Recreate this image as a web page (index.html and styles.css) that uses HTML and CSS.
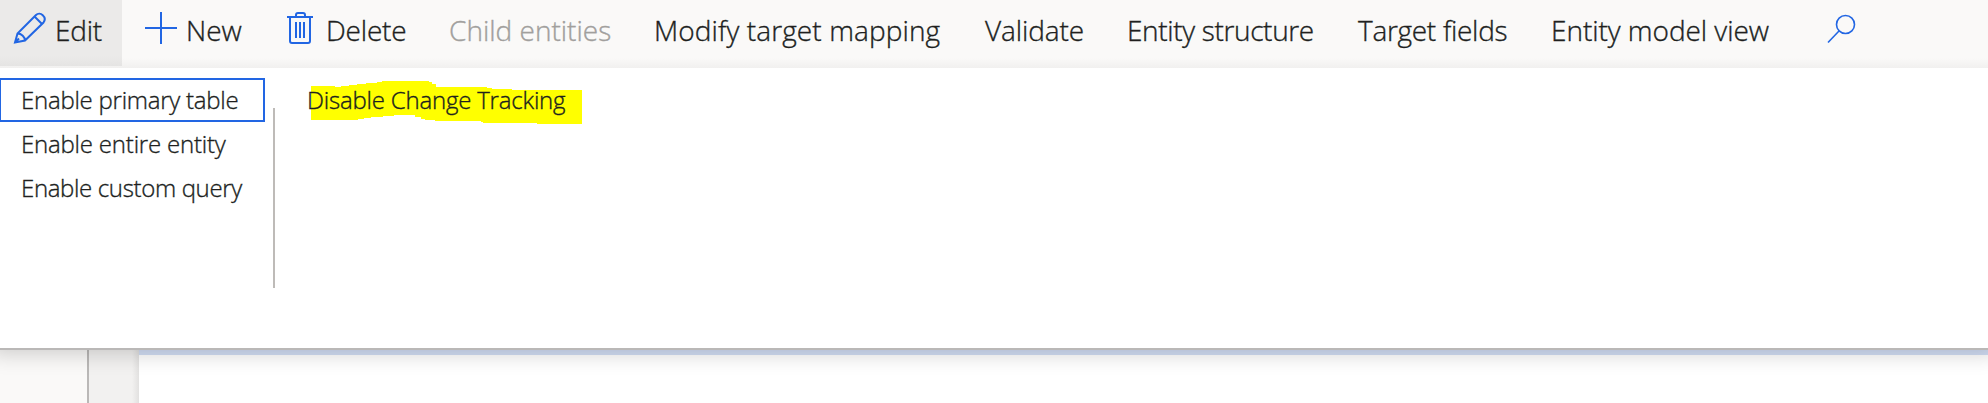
FILE: index.html
```
<!DOCTYPE html>
<html lang="en">
<head>
<meta charset="utf-8">
<title>Target entities</title>
<link rel="stylesheet" href="styles.css">
</head>
<body>
<div class="page">
  <nav class="toolbar">
    <a class="tool tool-edit active">
      <svg class="icon" width="34" height="34" viewBox="0 0 34 34"><path d="M2 30.500 4.500 21.500 23 3C27-1 34.500 5 30.500 10.500L12 28.500ZM21.500 4.500 29 12M4.500 21.500C8.500 21.500 12 25 12 28.500M2 30.500 6 26.500"/></svg>
      <span>Edit</span></a>
    <a class="tool tool-new">
      <svg class="icon" width="32" height="32" viewBox="0 0 32 32"><path d="M16 0V32M0 16H32"/></svg>
      <span>New</span></a>
    <a class="tool tool-delete">
      <svg class="icon" width="26" height="32" viewBox="0 0 26 32"><path d="M0 5H26M9 5V3Q9 1 11 1H16Q18 1 18 3V5M3 5V29Q3 31 5 31H21Q23 31 23 29V5M9 10V26M13 10V26M17 10V26"/></svg>
      <span>Delete</span></a>
    <a class="tool tool-child disabled"><span>Child entities</span></a>
    <a class="tool tool-mapping"><span>Modify target mapping</span></a>
    <a class="tool tool-validate"><span>Validate</span></a>
    <a class="tool tool-structure"><span>Entity structure</span></a>
    <a class="tool tool-fields"><span>Target fields</span></a>
    <a class="tool tool-model"><span>Entity model view</span></a>
    <a class="tool tool-search">
      <svg class="icon" width="29" height="30" viewBox="0 0 29 30"><circle cx="18.500" cy="10.500" r="9"/><path d="M12 17 1 28.500"/></svg></a>
  </nav>
  <section class="flyout">
    <ul class="menu">
      <li class="menu-item selected"><span>Enable primary table</span></li>
      <li class="menu-item entire"><span>Enable entire entity</span></li>
      <li class="menu-item custom"><span>Enable custom query</span></li>
    </ul>
    <div class="divider"></div>
    <div class="tracking">
      <svg class="marker" width="272" height="44" viewBox="0 0 272 44"><path d="M0 5H24V6H30V5H38V4H46V3H55V2H66V1H71V0H118V1H121V3H125V6H176V7H181V8H201V9H271V43H226V42H172V41H170V40H124V39H114V38H110V36H104V34H83V35H72V36H60V37H53V38H47V39H0Z"/></svg>
      <span class="disable">Disable Change Tracking</span>
    </div>
  </section>
  <main class="body">
    <div class="rail"></div>
    <div class="gutter"></div>
    <div class="content"></div>
  </main>
</div>
</body>
</html>
```
FILE: styles.css
```
* { box-sizing: border-box; }
body { margin: 0; background: #fff; }
.page {
  display: flex;
  flex-direction: column;
  width: 1988px;
  height: 403px;
  overflow: hidden;
  font-family: "Open Sans", "Noto Sans", sans-serif;
  font-weight: 300;
  color: #201f1e;
  -webkit-text-stroke: .35px currentColor;
}
.toolbar {
  position: relative;
  z-index: 2;
  display: grid;
  grid-template-columns: 122px 143px 162px 205px 331px 142px 230px 194px 275px 1fr;
  height: 68px;
  background: linear-gradient(#faf9f8 58px, #f1f0ef);
  font-size: 28px;
  line-height: 38px;
}
.tool { display: flex; align-items: flex-start; padding-top: 12px; white-space: nowrap; }
.tool span { margin-top: -1px; }
.tool.active { height: 66px; background: linear-gradient(#ebeae9 56px, #e5e4e3); }
.tool.disabled { color: #a19f9d; }
.icon { flex: none; fill: none; stroke: #2266e3; stroke-width: 2; }
.tool-edit { padding-left: 13px; letter-spacing: -.2px; }
.tool-edit .icon { margin-right: 8px; }
.tool-new { padding-left: 23px; }
.tool-new .icon { margin-right: 9px; }
.tool-delete { padding-left: 22px; letter-spacing: -.2px; }
.tool-delete .icon { margin-right: 13px; }
.tool-child { padding-left: 22px; }
.tool-mapping { padding-left: 22px; letter-spacing: .1px; }
.tool-validate { padding-left: 22px; letter-spacing: -.1px; }
.tool-structure { padding-left: 22px; letter-spacing: -.35px; }
.tool-model { padding-left: 22px; letter-spacing: -.05px; }
.tool-fields { padding-left: 23px; letter-spacing: -.3px; }
.tool-search { padding: 14px 0 0 23px; }
.tool-search .icon { stroke-width: 1.6; }

.flyout {
  position: relative;
  z-index: 1;
  display: flex;
  height: 282px;
  padding-top: 10px;
  background: #fff;
  border-bottom: 2px solid #bab8b7;
  box-shadow: 0 -6px 20px 10px rgba(0, 0, 0, .18);
  font-size: 24px;
  line-height: 44px;
  letter-spacing: -.2px;
}
.menu { width: 265px; margin: 0; padding: 0; list-style: none; }
.menu-item { height: 44px; padding-left: 21px; white-space: nowrap; letter-spacing: -.25px; }
.menu-item.selected { border: 2px solid #2266e3; border-left-width: 1px; padding-left: 20px; line-height: 40px; }
.menu-item.entire { letter-spacing: -.2px; }
.menu-item.custom { letter-spacing: -.35px; }
.divider { width: 2px; height: 180px; margin: 30px 0 0 8px; background: #bebbb8; }
.tracking { position: relative; margin-left: 32px; white-space: nowrap; }
.marker { position: absolute; left: 4px; top: 3px; fill: #ff0; }
.disable { position: relative; }

.body { display: flex; flex: 1; }
.rail { width: 89px; background: #faf9f8; border-right: 2px solid #bab8b7; }
.gutter { width: 50px; background: linear-gradient(to right, #f2f1f0 43px, #e2e1e0); }
.content { flex: 1; border-top: 5px solid #d3dff6; background: #fff; }
```
